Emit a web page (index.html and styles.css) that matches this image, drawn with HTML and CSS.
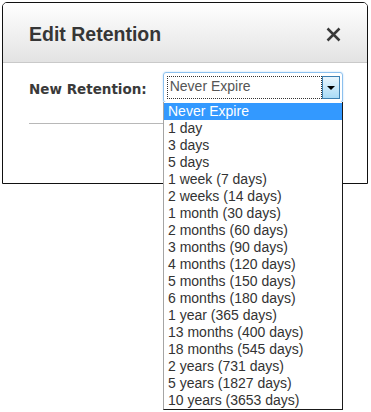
FILE: index.html
```html
<!DOCTYPE html>
<html lang="en">
<head>
    <meta charset="UTF-8">
    <meta name="viewport" content="width=device-width, initial-scale=1.0">
    <title>Edit Retention</title>
    <link rel="stylesheet" href="styles.css">
</head>
<body>
    <div class="dialog">
        <div class="dialog-header">
            <h1>Edit Retention</h1>
            <span class="close">
                <svg width="15" height="15" viewBox="0 0 15 15">
                    <path d="M1.5 1.5 L13.5 13.5 M13.5 1.5 L1.5 13.5" stroke="#3a3a3a" stroke-width="2.5" fill="none"/>
                </svg>
            </span>
        </div>
        <div class="dialog-body">
            <div class="field">
                <label>New Retention:</label>
                <div class="select">
                    <div class="select-value">Never Expire</div>
                    <div class="select-button"><span class="arrow"></span></div>
                </div>
            </div>
            <div class="divider"></div>
        </div>
    </div>

    <!-- open dropdown list -->
    <ul class="options">
        <li class="selected">Never Expire</li>
        <li>1 day</li>
        <li>3 days</li>
        <li>5 days</li>
        <li>1 week (7 days)</li>
        <li>2 weeks (14 days)</li>
        <li>1 month (30 days)</li>
        <li>2 months (60 days)</li>
        <li>3 months (90 days)</li>
        <li>4 months (120 days)</li>
        <li>5 months (150 days)</li>
        <li>6 months (180 days)</li>
        <li>1 year (365 days)</li>
        <li>13 months (400 days)</li>
        <li>18 months (545 days)</li>
        <li>2 years (731 days)</li>
        <li>5 years (1827 days)</li>
        <li>10 years (3653 days)</li>
    </ul>
</body>
</html>
```

FILE: styles.css
```css
body {
    margin: 0;
    background: #fff;
    font-family: "Liberation Sans", Arial, sans-serif;
    color: #333;
}
.dialog {
    margin: 2px;
    width: 364px;
    height: 180px;
    border: 1px solid #111;
    border-radius: 5px 5px 0 0;
    overflow: hidden;
}
.dialog-header {
    height: 59px;
    padding: 0 26px;
    display: flex;
    align-items: center;
    justify-content: space-between;
    background: linear-gradient(#ffffff, #e3e3e3);
    border-bottom: 1px solid #c9c9c9;
}
h1 {
    margin: 0;
    font-size: 19.5px;
    font-weight: bold;
    color: #363636;
    padding-top: 4px;
}
.close {
    display: flex;
    margin-right: 0;
    margin-top: 4px;
}
.dialog-body {
    padding: 9px 24px 0 25px;
}
.field {
    display: flex;
    align-items: center;
}
label {
    font-family: "DejaVu Sans", Verdana, sans-serif;
    font-weight: bold;
    font-size: 13.5px;
    color: #3a3a3a;
    width: 135px;
    padding-left: 1px;
    padding-top: 3px;
}
.select {
    width: 176px;
    height: 25px;
    border: 1px solid #8cc0ee;
    border-radius: 3px;
    box-shadow: 0 0 2px #b5d8f5;
    padding: 2px;
    display: flex;
}
.select-value {
    flex: 1;
    margin: 1px 0 1px 1px;
    border: 1px dotted #333;
    font-size: 14px;
    color: #555;
    padding-left: 2px;
    line-height: 19px;
}
.select-button {
    width: 16px;
    margin: 1px 0;
    border: 1px solid #3c7fb1;
    background: linear-gradient(#eaf6fd, #a9dbf6);
    display: flex;
    align-items: center;
    justify-content: center;
}
.arrow {
    width: 0;
    height: 0;
    border-left: 4px solid transparent;
    border-right: 4px solid transparent;
    border-top: 4px solid #000;
}
.divider {
    margin-top: 20px;
    margin-left: 1px;
    height: 1px;
    background: #b8b8b8;
    width: 314px;
}
.options {
    position: absolute;
    left: 163px;
    top: 102px;
    width: 178px;
    margin: 0;
    padding: 1px 0 0 0;
    list-style: none;
    background: #fff;
    border-left: 1px solid #a5a5a5;
    border-right: 1px solid #1a1a1a;
    border-bottom: 1px solid #1a1a1a;
    font-size: 14px;
}
.options li {
    height: 17px;
    line-height: 17px;
    padding-left: 4px;
    color: #333;
}
.options li.selected {
    background: #3399ff;
    color: #fff;
}
```
